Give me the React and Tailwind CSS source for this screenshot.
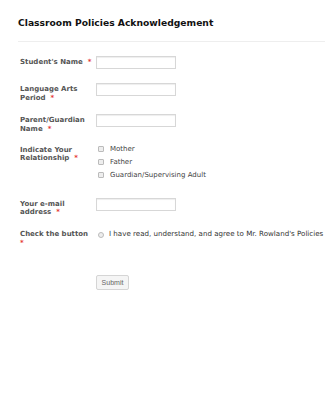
import { useState } from 'react'

const labelCls = "w-[76px] shrink-0 pt-[2px] font-['DejaVu_Sans',sans-serif] text-[7px] font-bold leading-[8.5px] text-[#555]"

function Req() {
  return <span className="ml-[5px] text-[#e53935]">*</span>
}

function TextInput() {
  return <div className="h-[13px] w-[80px] border border-[#d7d7d7] bg-white shadow-[inset_0_1px_1px_#eee]" />
}

function Box() {
  return <span className="inline-block h-[6px] w-[6px] rounded-[1px] border border-[#bbb] bg-[#eee]" />
}

export default function App() {
  const [agree, setAgree] = useState(false)
  const options = ['Mother', 'Father', 'Guardian/Supervising Adult']

  return (
    <div className="h-[400px] w-[325px] overflow-hidden bg-white font-['DejaVu_Sans',sans-serif]">
      {/* header */}
      <div className="ml-[18px] border-b border-[#eee] pb-[13px] pt-[17px]">
        <h1 className="text-[9.2px] font-bold leading-[11px] text-[#111]">Classroom Policies Acknowledgement</h1>
      </div>

      <div className="flex flex-col pl-[20px] pt-[14px]">
        <div className="flex h-[13px] items-start">
          <div className={labelCls}>Student's Name<Req /></div>
          <TextInput />
        </div>

        <div className="mt-[14px] flex h-[19px] items-start">
          <div className={labelCls}>Language Arts Period<Req /></div>
          <TextInput />
        </div>

        <div className="mt-[12px] flex h-[19px] items-start">
          <div className={labelCls}>Parent/Guardian Name<Req /></div>
          <TextInput />
        </div>

        <div className="mt-[10.5px] flex items-start">
          <div className={labelCls}>Indicate Your Relationship<Req /></div>
          <div className="flex flex-col gap-[4.5px] pl-[2px] pt-[1.25px]">
            {options.map(o => (
              <label key={o} className="flex h-[8.5px] items-center gap-[6px] text-[7px] leading-[8.5px] text-[#444]">
                <Box />
                {o}
              </label>
            ))}
          </div>
        </div>

        <div className="mt-[18.5px] flex h-[19px] items-start">
          <div className={labelCls}>Your e-mail address<Req /></div>
          <TextInput />
        </div>

        <div className="mt-[11.5px] flex h-[19px] items-start">
          <div className={labelCls}>Check the button<br /><span className="text-[#e53935]">*</span></div>
          <label className="flex items-center gap-[5px] pl-[2px] pt-[2px] text-[7.1px] leading-[8.5px] whitespace-nowrap text-[#333]" onClick={() => setAgree(v => !v)}>
            <span className={'inline-block h-[6px] w-[6px] rounded-full border border-[#bbb] ' + (agree ? 'bg-[#888]' : 'bg-[#eee]')} />
            I have read, understand, and agree to Mr. Rowland's Policies
          </label>
        </div>

        <div className="mt-[27.5px] flex pl-[76px]">
          <button className="h-[15px] w-[33px] rounded-[2px] border border-[#d5d5d5] bg-[#f5f5f5] font-['Liberation_Sans',sans-serif] text-[7px] leading-[13px] text-[#666]">
            Submit
          </button>
        </div>
      </div>
    </div>
  )
}
